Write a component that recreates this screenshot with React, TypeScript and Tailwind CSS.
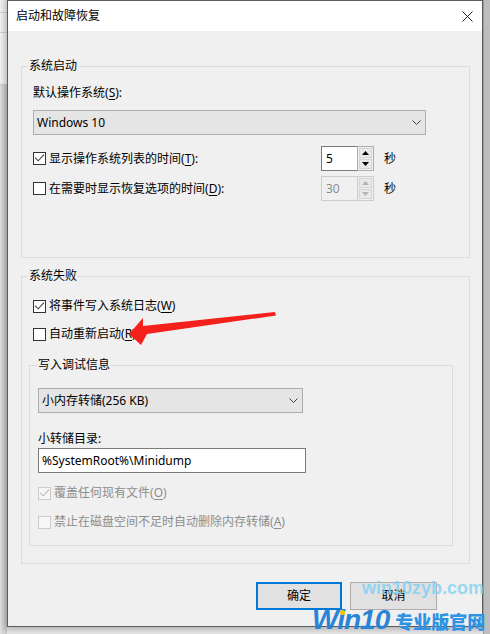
import React from "react";

function CheckBox({ checked, disabled }: { checked?: boolean; disabled?: boolean }) {
  return (
    <span
      className={`flex h-[13px] w-[13px] shrink-0 items-center justify-center border ${
        disabled ? "border-[#cccccc] bg-[#f7f7f7]" : "border-[#333333] bg-white"
      }`}
    >
      {checked && (
        <svg width="11" height="11" viewBox="0 0 11 11">
          <path
            d="M1 4.6 L4.2 7.8 L10 1.6"
            fill="none"
            stroke={disabled ? "#b9b9b9" : "#444444"}
            strokeWidth="1.1"
          />
        </svg>
      )}
    </span>
  );
}

function Chevron() {
  return (
    <svg width="9" height="5" viewBox="0 0 9 5">
      <path d="M0.5 0.5 L4.5 4.5 L8.5 0.5" fill="none" stroke="#404040" strokeWidth="1" />
    </svg>
  );
}

function Select({ value, width }: { value: string; width: string }) {
  return (
    <div
      className={`flex h-[25px] items-center justify-between border border-[#adadad] bg-[#e5e5e5] pl-[3px] pr-[4px] ${width}`}
    >
      <span>{value}</span>
      <Chevron />
    </div>
  );
}

function Arrow({ up, disabled }: { up?: boolean; disabled?: boolean }) {
  return (
    <span className="flex flex-1 items-center justify-center border border-[#d4d4d4] bg-[#e9e9e9]">
      <svg width="7" height="4" viewBox="0 0 7 4">
        <path
          d={up ? "M0 4 L3.5 0 L7 4 Z" : "M0 0 L3.5 4 L7 0 Z"}
          fill={disabled ? "#b4b4b4" : "#000000"}
        />
      </svg>
    </span>
  );
}

function Spin({ value, disabled }: { value: string; disabled?: boolean }) {
  return (
    <div className="flex h-[25px] w-[53px]">
      <div
        className={`flex flex-1 items-center border border-r-0 pl-[4px] ${
          disabled ? "border-[#cccccc] bg-[#f0f0f0] text-[#8d8d8d]" : "border-[#7a7a7a] bg-white"
        }`}
      >
        {value}
      </div>
      <div
        className={`flex w-[17px] flex-col gap-[1px] border p-[1px] ${
          disabled ? "border-[#cccccc] bg-[#f0f0f0]" : "border-[#adadad] bg-[#f0f0f0]"
        }`}
      >
        <Arrow up disabled={disabled} />
        <Arrow disabled={disabled} />
      </div>
    </div>
  );
}

function Key({ k }: { k: string }) {
  return (
    <>
      (<span className="underline underline-offset-2">{k}</span>)
    </>
  );
}

export default function App() {
  return (
    <div className="relative flex h-[634px] w-[490px] overflow-hidden bg-[#e9e9e9] font-['Noto_Sans','Noto_Sans_CJK_SC',sans-serif] text-[12px] leading-[16px] text-black">
      {/* window behind, left edge */}
      <div className="flex w-[7px] flex-col">
        <div className="h-[85px] border-b border-[#d0d0d0] bg-[#f4f4f4]">
          <div className="mt-[12px] h-[21px] border-y border-[#d6d6d6]" />
        </div>
        <div className="flex-1 bg-[linear-gradient(to_right,#e2e2e2,#c9c9c9)]" />
      </div>

      {/* dialog */}
      <div className="flex h-[627px] w-[476px] shrink-0 flex-col border border-[#5c5c5c] bg-[#f0f0f0] shadow-[0_0_7px_2px_rgba(0,0,0,0.28)]">
        <div className="flex h-[30px] items-center justify-between bg-white pl-[8px] pr-[9px]">
          <span>启动和故障恢复</span>
          <svg width="11" height="11" viewBox="0 0 11 11">
            <path d="M0.5 0.5 L10.5 10.5 M10.5 0.5 L0.5 10.5" stroke="#222222" strokeWidth="1" />
          </svg>
        </div>

        <div className="flex flex-1 flex-col px-[13px] pt-[27px]">
          {/* 系统启动 */}
          <fieldset className="h-[200px] w-[449px] border border-[#dcdcdc] p-0">
            <legend className="ml-[6px] px-[1px] leading-[16px]">系统启动</legend>
            <div className="pl-[11px] pt-[11px]">
              <div>
                默认操作系统<Key k="S" />:
              </div>
              <div className="mt-[9px]">
                <Select value="Windows 10" width="w-[393px]" />
              </div>
              <div className="mt-[11px] flex h-[25px] items-center">
                <div className="flex w-[288px] items-center gap-[3px]">
                  <CheckBox checked />
                  <span>
                    显示操作系统列表的时间<Key k="T" />:
                  </span>
                </div>
                <Spin value="5" />
                <span className="ml-[10px]">秒</span>
              </div>
              <div className="mt-[5px] flex h-[25px] items-center">
                <div className="flex w-[288px] items-center gap-[3px]">
                  <CheckBox />
                  <span>
                    在需要时显示恢复选项的时间<Key k="D" />:
                  </span>
                </div>
                <Spin value="30" disabled />
                <span className="ml-[10px]">秒</span>
              </div>
            </div>
          </fieldset>

          {/* 系统失败 */}
          <fieldset className="mt-[10px] h-[296px] w-[449px] border border-[#dcdcdc] p-0">
            <legend className="ml-[6px] px-[1px] leading-[16px]">系统失败</legend>
            <div className="pl-[7px] pt-[14px]">
              <div className="ml-[4px] flex h-[16px] items-center gap-[3px]">
                <CheckBox checked />
                <span>
                  将事件写入系统日志<Key k="W" />
                </span>
              </div>
              <div className="ml-[4px] mt-[12px] flex h-[16px] items-center gap-[3px]">
                <CheckBox />
                <span>
                  自动重新启动<Key k="R" />
                </span>
              </div>

              <fieldset className="mt-[15px] h-[189px] w-[424px] border border-[#dcdcdc] p-0">
                <legend className="ml-[7px] px-[1px] leading-[16px]">写入调试信息</legend>
                <div className="pl-[8px] pt-[15px]">
                  <Select value="小内存转储(256 KB)" width="w-[265px]" />
                  <div className="mt-[18px]">小转储目录:</div>
                  <div className="mt-[1px] flex h-[25px] w-[268px] items-center border border-[#7a7a7a] bg-white pl-[3px]">
                    %SystemRoot%\Minidump
                  </div>
                  <div className="mt-[12px] flex h-[16px] items-center gap-[3px] text-[#8d8d8d]">
                    <CheckBox checked disabled />
                    <span>
                      覆盖任何现有文件<Key k="O" />
                    </span>
                  </div>
                  <div className="mt-[13px] flex h-[16px] items-center gap-[3px] text-[#8d8d8d]">
                    <CheckBox disabled />
                    <span>
                      禁止在磁盘空间不足时自动删除内存转储<Key k="A" />
                    </span>
                  </div>
                </div>
              </fieldset>
            </div>
          </fieldset>

          <div className="mt-[18px] flex justify-end gap-[8px] pr-[32px]">
            <button className="flex h-[28px] w-[86px] items-center justify-center border-2 border-[#0078d7] bg-[#e1e1e1]">
              确定
            </button>
            <button className="flex h-[28px] w-[87px] items-center justify-center border border-[#adadad] bg-[#e1e1e1]">
              取消
            </button>
          </div>
        </div>
      </div>

      <div className="flex-1 border-l border-[#9a9a9a] bg-[#bdbdbd]" />

      {/* annotation arrow */}
      <svg className="pointer-events-none absolute left-0 top-0" width="490" height="634">
        <polygon
          points="129,334 143,318 143,326 275,312 276,315.5 147,334 141,345"
          fill="#f4201c"
        />
      </svg>

      {/* watermark */}
      <div className="pointer-events-none absolute left-[362px] top-[579px] font-['Liberation_Sans',sans-serif] text-[18px] font-bold leading-none text-[#7fd0f2]/80">
        win10zyb.com
      </div>
      <div className="pointer-events-none absolute left-[312px] top-[606px] flex items-baseline whitespace-nowrap font-['Liberation_Sans','Noto_Sans_CJK_SC',sans-serif] font-bold leading-none">
        <span className="text-[28px] italic tracking-[-1px] text-[#2a84d6]">Win10</span>
        <span className="ml-[6px] text-[18px] font-black text-[#2f93e4]">专业版官网</span>
      </div>
      <span className="pointer-events-none absolute left-[340px] top-[610px] h-[5px] w-[5px] rounded-full bg-[#f5c400]" />
    </div>
  );
}
